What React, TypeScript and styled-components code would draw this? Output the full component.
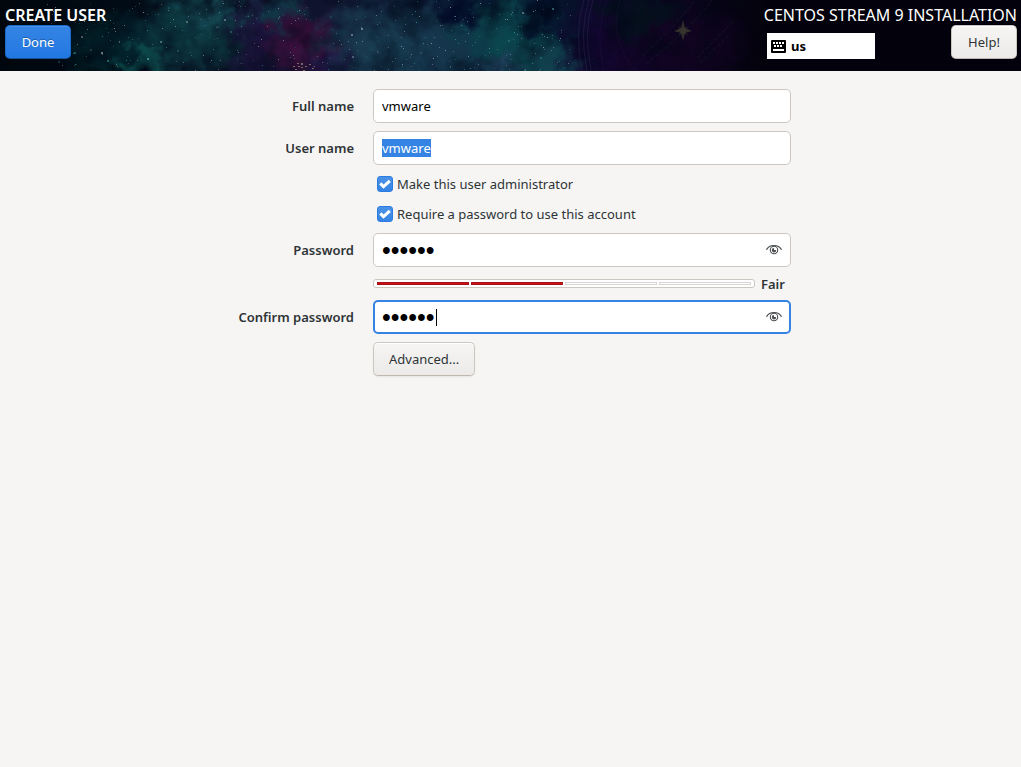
import React, { useEffect, useRef, useState } from 'react';
import styled, { createGlobalStyle, css } from 'styled-components';

const GlobalStyle = createGlobalStyle`
  *, *::before, *::after { box-sizing: border-box; }
  body {
    margin: 0;
    background: #f6f5f4;
    color: #2e3436;
    font-family: "Noto Sans", "Open Sans", sans-serif;
    font-size: 13px;
    line-height: 18px;
  }
`;

const Header = styled.header`
  position: relative;
  display: flex;
  justify-content: space-between;
  padding: 5px 4px 12px 5px;
  background: #03020c;
  color: #ffffff;
  overflow: hidden;
`;

const Nebula = styled.svg`
  position: absolute;
  top: 0;
  left: 0;
  width: 1021px;
  height: 71px;
`;

const HeaderSide = styled.div<{ $end?: boolean }>`
  position: relative;
  display: flex;
  flex-direction: column;
  align-items: ${(p) => (p.$end ? 'flex-end' : 'flex-start')};
`;

const Title = styled.h1`
  margin: 0;
  font-size: 16px;
  line-height: 20px;
  font-weight: 600;
`;

const Product = styled.div`
  font-size: 16px;
  line-height: 20px;
  white-space: nowrap;
`;

const HeaderTools = styled.div`
  display: flex;
  width: 250px;
  align-items: flex-end;
  justify-content: space-between;
`;

const KeyboardLayout = styled.button`
  display: flex;
  align-items: center;
  gap: 5px;
  width: 108px;
  height: 26px;
  padding: 0 4px;
  border: 0;
  background: #ffffff;
  color: #000000;
  font: inherit;
  font-weight: 700;
`;

const Button = styled.button<{ $primary?: boolean }>`
  min-width: 66px;
  height: 34px;
  padding: 0 15px;
  border: 1px solid #cdc7c2;
  border-bottom-color: #bfb8b1;
  border-radius: 5px;
  background: linear-gradient(to top, #edebe9 2px, #f6f5f4);
  box-shadow: inset 0 1px #ffffff, 0 1px 2px rgba(0, 0, 0, 0.07);
  color: #2e3436;
  font: inherit;
  ${(p) =>
    p.$primary &&
    css`
      border-color: #1b6acb;
      border-bottom-color: #15539e;
      background: linear-gradient(to top, #2379e2 2px, #3584e4);
      box-shadow: inset 0 1px rgba(255, 255, 255, 0.1);
      color: #ffffff;
      text-shadow: 0 -1px rgba(0, 0, 0, 0.3);
    `}
`;

const Form = styled.form`
  display: grid;
  grid-template-columns: 114px minmax(0, 418px);
  justify-content: center;
  align-items: center;
  gap: 8px 19px;
  padding: 18px 0 18px 10px;
`;

const FieldLabel = styled.label`
  grid-column: 1;
  justify-self: end;
  font-weight: 600;
  white-space: nowrap;
`;

const Field = styled.div`
  grid-column: 2;
  position: relative;
  display: flex;
  align-items: center;
`;

const TextInput = styled.input<{ $active?: boolean }>`
  width: 100%;
  height: 34px;
  padding: 0 8px;
  border: 1px solid #cdc7c2;
  border-radius: 5px;
  background: #ffffff;
  color: #000000;
  font: inherit;
  outline: none;
  &::selection { background: #3584e4; color: #ffffff; }
  &[type='password'] { font-family: "Liberation Sans", Arial, sans-serif; font-size: 25px; }
  ${(p) =>
    p.$active &&
    css`
      padding: 0 7px;
      border: 2px solid #3584e4;
    `}
`;

const Caret = styled.span`
  position: absolute;
  left: 63px;
  width: 1px;
  height: 17px;
  background: #000000;
`;

const RevealButton = styled.button`
  position: absolute;
  right: 9px;
  display: flex;
  padding: 0;
  border: 0;
  background: none;
  color: #4b4f51;
`;

const CheckRow = styled.label`
  grid-column: 2;
  display: flex;
  align-items: center;
  gap: 4px;
  height: 22px;
  padding-left: 4px;
`;

const CheckBox = styled.input`
  appearance: none;
  width: 16px;
  height: 16px;
  margin: 0;
  border: 1px solid #cdc7c2;
  border-radius: 3px;
  background: #ffffff;
  &:checked {
    border-color: #2b7be0;
    background: url("data:image/svg+xml,%3Csvg xmlns='http://www.w3.org/2000/svg' viewBox='0 0 14 14'%3E%3Cpath d='M2.3 6.400 5.500 9.600 11.800 3.800' fill='none' stroke='white' stroke-width='3.100'/%3E%3C/svg%3E") center / 14px 14px no-repeat,
      linear-gradient(#4b92e8, #3584e4);
  }
`;

const Strength = styled.div`
  grid-column: 2;
  display: flex;
  align-items: center;
  gap: 6px;
  height: 17px;
  padding-right: 5px;
  font-weight: 600;
`;

const StrengthBar = styled.div`
  flex: 1;
  display: flex;
  gap: 2px;
  height: 9px;
  padding: 2px 3px;
  border: 1px solid #cdc7c2;
  border-radius: 3px;
  background: #ffffff;
`;

const StrengthBlock = styled.span<{ $filled: boolean }>`
  flex: 1;
  border: 1px solid ${(p) => (p.$filled ? '#a51218' : '#d8d5d2')};
  background: ${(p) => (p.$filled ? '#d40f14' : '#ffffff')};
`;

const StrengthText = styled.span`
  width: 25px;
`;

const Actions = styled.div`
  grid-column: 2;
`;

function createRandom(seed: number) {
  let s = seed;
  return () => {
    s = (s * 16807) % 2147483647;
    return s / 2147483647;
  };
}

const random = createRandom(4171);
const starColors = ['#4db5b0', '#8ba7b8', '#b9c4c3', '#2c8b89', '#a99a98'];
const stars = Array.from({ length: 400 }, () => {
  const x = Math.round(40 + random() * 530);
  return {
    x,
    y: Math.round(random() * 71),
    size: random() > 0.93 ? 2 : 1,
    color: starColors[Math.floor(random() * starColors.length)],
    opacity: 0.15 + random() * 0.5,
  };
});

const clouds = [
  { x: 120, y: 45, rx: 75, ry: 40, color: '#04333b', o: 0.6 },
  { x: 142, y: 64, rx: 28, ry: 16, color: '#147068', o: 0.6 },
  { x: 195, y: 30, rx: 70, ry: 55, color: '#0f444b', o: 0.9 },
  { x: 210, y: 12, rx: 34, ry: 26, color: '#1d5a66', o: 0.6 },
  { x: 255, y: 35, rx: 32, ry: 55, color: '#201440', o: 0.9 },
  { x: 278, y: 10, rx: 35, ry: 22, color: '#124650', o: 0.7 },
  { x: 302, y: 45, rx: 40, ry: 42, color: '#40103f', o: 1 },
  { x: 332, y: 64, rx: 25, ry: 20, color: '#250440', o: 1 },
  { x: 375, y: 48, rx: 70, ry: 60, color: '#1b3f53', o: 1 },
  { x: 430, y: 50, rx: 75, ry: 50, color: '#173b50', o: 1 },
  { x: 510, y: 40, rx: 60, ry: 60, color: '#0c484f', o: 1 },
  { x: 494, y: 64, rx: 22, ry: 18, color: '#24405e', o: 0.8 },
  { x: 550, y: 68, rx: 55, ry: 22, color: '#144450', o: 0.9 },
  { x: 605, y: 45, rx: 48, ry: 62, color: '#130631', o: 1 },
  { x: 675, y: 45, rx: 85, ry: 60, color: '#150425', o: 0.8 },
  { x: 640, y: 14, rx: 45, ry: 30, color: '#03121b', o: 1 },
  { x: 455, y: 10, rx: 28, ry: 22, color: '#030c2a', o: 1 },
  { x: 540, y: 10, rx: 28, ry: 24, color: '#030b24', o: 0.9 },
];

function NebulaArt() {
  return (
    <Nebula viewBox="0 0 1021 71" preserveAspectRatio="none" aria-hidden="true">
      <defs>
        {clouds.map((c, i) => (
          <radialGradient key={i} id={`cloud${i}`}>
            <stop offset="0" stopColor={c.color} stopOpacity={c.o} />
            <stop offset="0.5" stopColor={c.color} stopOpacity={c.o * 0.7} />
            <stop offset="1" stopColor={c.color} stopOpacity="0" />
          </radialGradient>
        ))}
        <linearGradient id="base">
          <stop offset="0" stopColor="#01070c" />
          <stop offset="0.12" stopColor="#020d16" />
          <stop offset="0.3" stopColor="#10142e" />
          <stop offset="0.52" stopColor="#071d35" />
          <stop offset="0.6" stopColor="#0c0927" />
          <stop offset="0.75" stopColor="#03020c" />
        </linearGradient>
        <filter id="rough" x="-5%" y="-20%" width="110%" height="140%" colorInterpolationFilters="sRGB">
          <feTurbulence type="fractalNoise" baseFrequency="0.05" numOctaves="6" seed="8" />
          <feDisplacementMap in="SourceGraphic" scale="55" xChannelSelector="R" yChannelSelector="G" />
        </filter>
        <filter id="dust" x="0" y="0" width="100%" height="100%" colorInterpolationFilters="sRGB">
          <feTurbulence type="fractalNoise" baseFrequency="0.035" numOctaves="7" seed="21" />
          <feColorMatrix values="0 0 0 0 0  0 0 0 0 0.02  0 0 0 0 0.08  0 2.6 0 0 -1.1" />
        </filter>
      </defs>
      <rect width="1021" height="71" fill="url(#base)" />
      <g filter="url(#rough)">
        {clouds.map((c, i) => (
          <ellipse key={i} cx={c.x} cy={c.y} rx={c.rx} ry={c.ry} fill={`url(#cloud${i})`} />
        ))}
      </g>
      <rect width="720" height="71" filter="url(#dust)" opacity="0.5" />
      <g fill="none" stroke="#423866" opacity="0.3">
        <path d="M584 0Q574 30 582 71M589 0Q579 30 587 71M593 0Q583 30 591 71" />
        <path d="M607 0Q594 35 604 71M620 0Q608 40 636 71" opacity="0.4" />
      </g>
      <g fill="none" stroke="#175052" opacity="0.25">
        <path d="M642 56Q674 28 695 0M646 64Q690 29 712 0M697 58L735 19M700 63L730 34" strokeDasharray="4 2" />
      </g>
      {stars.map((s, i) => (
        <rect key={i} x={s.x} y={s.y} width={s.size} height={s.size} fill={s.color} opacity={s.opacity} />
      ))}
      <g fill="#d5bd8c" opacity="0.5">
        {[[293, 66], [297, 63], [301, 67], [305, 66], [309, 64], [295, 69], [303, 70], [312, 68], [298, 66]].map(([x, y]) => (
          <rect key={`${x}-${y}`} x={x} y={y} width="2" height="1" />
        ))}
      </g>
      <path d="M683 20l2 8 7 3-7 2-2 8-2-8-7-2 7-3z" fill="#3b3a30" opacity="0.8" />
      <path d="M678 26l5 3 5-3-3 5 3 5-5-3-5 3 3-5z" fill="#3b3a30" opacity="0.5" />
    </Nebula>
  );
}

function KeyboardIcon() {
  return (
    <svg width="15" height="13" viewBox="0 0 15 13" aria-hidden="true">
      <rect width="15" height="13" rx="1" fill="#000" />
      <path d="M2 2h2v2H2zM5 2h2v2H5zM8 2h2v2H8zM11 2h2v2h-2zM3 5h2v2H3zM6 5h2v2H6zM9 5h2v2H9zM2 9h11v2H2z" fill="#fff" />
    </svg>
  );
}

function EyeIcon() {
  return (
    <svg width="16" height="16" viewBox="0 0 16 16" fill="none" stroke="currentColor" aria-hidden="true">
      <path d="M.5 7.700C2 4.900 4.700 3.500 8 3.500S14 4.900 15.500 7.700" strokeWidth="1.200" />
      <circle cx="8" cy="8" r="3.700" strokeWidth="1.100" />
      <path d="M8 6V8h2.200A2.200 2.200 0 1 1 8 6z" fill="currentColor" stroke="none" />
    </svg>
  );
}

function PasswordField({ id, label, active }: { id: string; label: string; active?: boolean }) {
  const [value, setValue] = useState('vmware');
  const [visible, setVisible] = useState(false);
  return (
    <>
      <FieldLabel htmlFor={id}>{label}</FieldLabel>
      <Field>
        <TextInput
          id={id}
          type={visible ? 'text' : 'password'}
          value={value}
          $active={active}
          onChange={(e) => setValue(e.target.value)}
        />
        {active && <Caret />}
        <RevealButton type="button" aria-label="Show password" onClick={() => setVisible(!visible)}>
          <EyeIcon />
        </RevealButton>
      </Field>
    </>
  );
}

export default function App() {
  const userName = useRef<HTMLInputElement>(null);

  useEffect(() => {
    userName.current?.focus();
    userName.current?.select();
  }, []);

  return (
    <>
      <GlobalStyle />
      <Header>
        <NebulaArt />
        <HeaderSide>
          <Title>CREATE USER</Title>
          <Button type="button" $primary>Done</Button>
        </HeaderSide>
        <HeaderSide $end>
          <Product>CENTOS STREAM 9 INSTALLATION</Product>
          <HeaderTools>
            <KeyboardLayout type="button">
              <KeyboardIcon />
              us
            </KeyboardLayout>
            <Button type="button">Help!</Button>
          </HeaderTools>
        </HeaderSide>
      </Header>
      <Form onSubmit={(e) => e.preventDefault()}>
        <FieldLabel htmlFor="full-name">Full name</FieldLabel>
        <Field>
          <TextInput id="full-name" defaultValue="vmware" />
        </Field>
        <FieldLabel htmlFor="user-name">User name</FieldLabel>
        <Field>
          <TextInput id="user-name" ref={userName} defaultValue="vmware" />
        </Field>
        <CheckRow>
          <CheckBox type="checkbox" defaultChecked />
          Make this user administrator
        </CheckRow>
        <CheckRow>
          <CheckBox type="checkbox" defaultChecked />
          Require a password to use this account
        </CheckRow>
        <PasswordField id="password" label="Password" />
        <Strength>
          <StrengthBar>
            {[0, 1, 2, 3].map((n) => (
              <StrengthBlock key={n} $filled={n < 2} />
            ))}
          </StrengthBar>
          <StrengthText>Fair</StrengthText>
        </Strength>
        <PasswordField id="confirm-password" label="Confirm password" active />
        <Actions>
          <Button type="button">Advanced...</Button>
        </Actions>
      </Form>
    </>
  );
}
